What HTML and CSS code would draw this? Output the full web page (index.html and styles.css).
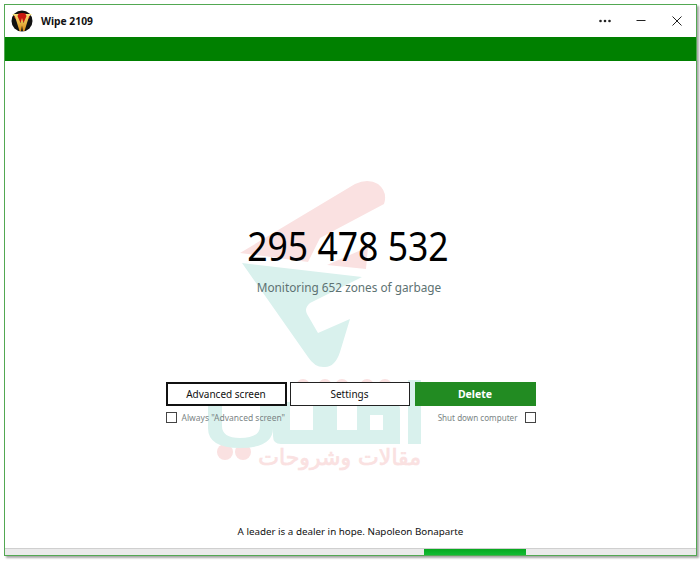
FILE: index.html
```html
<!DOCTYPE html>
<html lang="en">
<head>
    <meta charset="UTF-8">
    <title>Wipe 2109</title>
    <link rel="stylesheet" href="styles.css">
</head>
<body>
    <div class="window">
        <div class="titlebar">
            <svg class="logo" viewBox="0 0 22 22" width="22" height="22">
                <defs>
                    <linearGradient id="wGold" x1="0" y1="0" x2="0" y2="1">
                        <stop offset="0" stop-color="#f6e27a"/>
                        <stop offset="1" stop-color="#d98a16"/>
                    </linearGradient>
                </defs>
                <circle cx="11" cy="11" r="10.5" fill="#111"/>
                <path d="M3 7 A10 10 0 0 1 19 7 L15 12 H7 Z" fill="#c8170f"/>
                <path d="M1 4 H7.5 L6.5 6 L9.5 13 L11 8 L12.5 13 L15.5 6 L14.5 4 H21 L18 6.5 L13.5 21 H12 L11 15.5 L10 21 H8.5 L4 6.5 Z" fill="url(#wGold)"/>
            </svg>
            <span class="app-name">Wipe 2109</span>
            <div class="window-controls">
                <svg viewBox="0 0 20 12" width="20" height="12"><g fill="#222"><circle cx="5.5" cy="6" r="1.3"/><circle cx="10" cy="6" r="1.3"/><circle cx="14.5" cy="6" r="1.3"/></g></svg>
                <svg viewBox="0 0 20 12" width="20" height="12"><path d="M5.5 5.5H14.5" stroke="#222" stroke-width="1"/></svg>
                <svg viewBox="0 0 20 12" width="20" height="12"><path d="M5.5 1.5L14.5 10.5M14.5 1.5L5.5 10.5" stroke="#222" stroke-width="1" fill="none"/></svg>
            </div>
        </div>
        <div class="green-band"></div>

        <div class="content">
            <svg class="watermark" viewBox="0 0 700 561" width="700" height="561">
                <g fill="#fae1e1">
                    <path d="M240 253 L355 184 Q368 178 378 184 Q388 192 384 204 L320 238 L308 262 Z"/>
                    <path d="M327 265 L368 247 L366 269 Z"/>
                    <circle cx="225" cy="452" r="8"/><circle cx="243" cy="452" r="8"/>
                    <circle cx="303" cy="386" r="7"/><circle cx="325" cy="386" r="7"/>
                    <circle cx="342" cy="386" r="7"/><circle cx="367" cy="386" r="7"/><circle cx="385" cy="386" r="7"/>
                </g>
                <g fill="#d9f1ed">
                    <path d="M242 263 L362 277 L310 303 Q304 308 307 314 L318 333 L350 319 L340 352 Q335 367 325 367 Q315 368 308 357 Z"/>
                    <path d="M208 402 H222 V426 Q222 438 240 438 Q260 438 260 426 V402 H273 V428 Q273 448 240 448 Q208 448 208 428 Z"/>
                    <path fill-rule="evenodd" d="M273 402 H290 V430 H313 V402 H337 V430 H357 V402 H392 Q400 402 400 410 V444 H281 Q273 444 273 436 Z M370 415 V430 H383 V415 Z"/>
                    <path d="M408 380 H421 V444 H408 Z"/>
                </g>
                <text class="tagline" x="421" y="465" direction="rtl">مقالات وشروحات</text>
            </svg>

            <div class="counter">295 478 532</div>
            <div class="status">Monitoring 652 zones of garbage</div>

            <div class="actions">
                <div class="action-col col-advanced">
                    <button class="btn btn-primary-outline">Advanced screen</button>
                    <label class="check"><span class="box"></span>Always "Advanced screen"</label>
                </div>
                <div class="action-col col-settings">
                    <button class="btn btn-outline">Settings</button>
                </div>
                <div class="action-col col-delete">
                    <button class="btn btn-delete">Delete</button>
                    <label class="check check-right">Shut down computer<span class="box"></span></label>
                </div>
            </div>

            <div class="quote">A leader is a dealer in hope. Napoleon Bonaparte</div>
        </div>

        <div class="footer-bar"><div class="progress"></div></div>
    </div>
</body>
</html>
```

FILE: styles.css
```css
* {
    margin: 0;
    padding: 0;
    box-sizing: border-box;
    font-family: 'Noto Sans', 'DejaVu Sans', sans-serif;
}

body {
    background: #fff;
    width: 700px;
    height: 561px;
    padding: 4px 3px 5px 4px;
    overflow: hidden;
}

.window {
    height: 552px;
    display: flex;
    flex-direction: column;
    border: 1px solid #52a852;
    background: #fff;
    box-shadow: 2px 2px 2px rgba(0,0,0,0.35);
}

.titlebar {
    height: 32px;
    display: flex;
    align-items: center;
    padding-left: 6px;
    flex-shrink: 0;
}

.logo {
    margin-right: 8px;
}

.app-name {
    font-size: 10.3px;
    font-weight: 700;
    color: #111;
}

.window-controls {
    margin-left: auto;
    display: flex;
    gap: 16px;
    padding-right: 9px;
}

.green-band {
    height: 24px;
    background: #008000;
    flex-shrink: 0;
}

.content {
    flex: 1;
    position: relative;
    display: flex;
    flex-direction: column;
    align-items: center;
    padding-top: 163px;
}

.watermark {
    position: absolute;
    left: -5px;
    top: -61px;
}

.tagline {
    font-family: 'DejaVu Sans', sans-serif;
    font-size: 22px;
    fill: #fae1e1;
    stroke: #fae1e1;
    stroke-width: 0.7px;
}

.counter {
    position: relative;
    margin-right: 6px;
    font-size: 39.5px;
    line-height: 44px;
    color: #000;
    transform: scaleX(0.9);
}

.status {
    position: relative;
    margin-top: 10px;
    margin-right: 3px;
    font-size: 11.8px;
    line-height: 18px;
    color: #5d7272;
}

.actions {
    position: relative;
    display: flex;
    margin-top: 86px;
}

.action-col {
    display: flex;
    flex-direction: column;
}

.col-advanced {
    width: 121px;
}

.col-settings {
    width: 120px;
    margin: 0 5px 0 3px;
}

.col-delete {
    width: 121px;
}

.btn {
    height: 24px;
    width: 100%;
    font-size: 10px;
    color: #111;
    background: #fff;
    border: 1px solid #222;
}

.btn-primary-outline {
    border-width: 2px;
    border-color: #111;
}

.btn-delete {
    font-size: 10.5px;
    background: #228b22;
    border: none;
    color: #fff;
    font-weight: 700;
}

.check {
    display: flex;
    align-items: center;
    gap: 5px;
    margin-top: 6px;
    font-size: 8.5px;
    line-height: 11px;
    color: #7b8585;
    white-space: nowrap;
}

.check-right {
    justify-content: flex-end;
    gap: 7px;
    font-size: 8.1px;
}

.box {
    width: 11px;
    height: 11px;
    border: 1px solid #444;
    background: #fff;
}

.quote {
    position: absolute;
    bottom: 9px;
    left: 0;
    right: 0;
    text-align: center;
    font-size: 9.8px;
    line-height: 14px;
    color: #111;
}

.footer-bar {
    height: 7px;
    flex-shrink: 0;
    display: flex;
    background: #eaeaea;
    border-top: 1px solid #cfcfcf;
}

.progress {
    width: 102px;
    margin-left: 419px;
    background: linear-gradient(#08a820, #12bc34);
}
```
